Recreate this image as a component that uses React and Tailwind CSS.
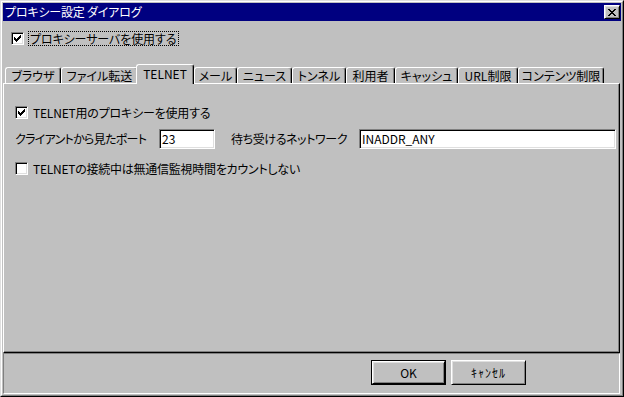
import React from 'react';

const FONT = "font-['Noto_Sans_CJK_JP','Noto_Sans',sans-serif] [font-feature-settings:'palt']";

// classic 7x7 check mark, one column per rect
const CHECK_COLS = [2, 3, 4, 3, 2, 1, 0];

const CheckBox = ({ checked }) => (
  <div className="w-[13px] h-[13px] box-border border border-t-[#808080] border-l-[#808080] border-b-white border-r-white bg-white shadow-[inset_1px_1px_0_#000,inset_-1px_-1px_0_#dfdfdf] flex items-center justify-center shrink-0">
    {checked && (
      <svg width="7" height="7" viewBox="0 0 7 7" shapeRendering="crispEdges">
        {CHECK_COLS.map((y, x) => (
          <rect key={x} x={x} y={y} width="1" height="3" fill="#000" />
        ))}
      </svg>
    )}
  </div>
);

const CloseGlyph = () => {
  const rows = [
    [0, 1, 6, 7],
    [1, 2, 5, 6],
    [2, 3, 4, 5],
    [3, 4],
    [2, 3, 4, 5],
    [1, 2, 5, 6],
    [0, 1, 6, 7],
  ];
  return (
    <svg width="8" height="7" viewBox="0 0 8 7" shapeRendering="crispEdges">
      {rows.map((xs, y) => xs.map((x) => <rect key={`${x}-${y}`} x={x} y={y} width="1" height="1" fill="#000" />))}
    </svg>
  );
};

const TABS = [
  { label: "ブラウザ", w: "w-[56px]" },
  { label: "ファイル転送", w: "w-[77px]" },
  { label: "TELNET", w: "w-[58px]", active: true },
  { label: "メール", w: "w-[43px]" },
  { label: "ニュース", w: "w-[55px]" },
  { label: "トンネル", w: "w-[54px]" },
  { label: "利用者", w: "w-[49px]" },
  { label: "キャッシュ", w: "w-[63px]" },
  { label: "URL制限", w: "w-[60px]" },
  { label: "コンテンツ制限", w: "w-[86px]" },
];

const Field = ({ value, className }) => (
  <div className={`h-[20px] box-border border border-t-[#808080] border-l-[#808080] border-b-white border-r-white bg-white shadow-[inset_1px_1px_0_#000,inset_-1px_-1px_0_#dfdfdf] pl-[2px] flex items-center text-[12px] leading-none text-black ${className}`}>
    {value}
  </div>
);

export default function App() {
  return (
    <div className={`w-[624px] h-[397px] box-border border border-t-[#dfdfdf] border-l-[#dfdfdf] border-r-black border-b-black ${FONT}`}>
      <div className="h-full box-border border border-t-white border-l-white border-r-[#808080] border-b-[#808080] bg-[#c0c0c0] flex flex-col">
        {/* Title bar */}
        <div className="mt-[1px] mx-[1px] h-[18px] bg-[#000080] flex items-center pl-[2px] pr-[1px] shrink-0">
          <span className="text-white text-[12px] leading-none flex-1 tracking-[-0.2px]">プロキシー設定 ダイアログ</span>
          <div className="w-[16px] h-[14px] box-border border border-t-white border-l-white border-r-black border-b-black shadow-[inset_1px_1px_0_#dfdfdf,inset_-1px_-1px_0_#808080] bg-[#c0c0c0] flex items-center justify-center">
            <CloseGlyph />
          </div>
        </div>

        {/* Use proxy */}
        <div className="mt-[10px] h-[15px] ml-[9px] flex items-center shrink-0">
          <CheckBox checked />
          <div className="ml-[4px] h-[15px] w-[151px] box-border border border-dotted border-black flex items-center pl-[1px] text-[12px] leading-none text-black tracking-[-0.1px]">
            プロキシーサーバを使用する
          </div>
        </div>

        {/* Tabs */}
        <div className="mt-[18px] h-[19px] pl-[3px] flex items-end shrink-0">
          {TABS.map((t) =>
            t.active ? (
              <div
                key={t.label}
                className={`${t.w} -ml-[2px] h-[20px] -mb-[1px] relative z-10 box-border border-t border-l border-r border-t-white border-l-white border-r-black rounded-t-[3px] bg-[#c0c0c0] shadow-[inset_-1px_0_0_#808080] flex justify-center pt-[2px] text-[12px] leading-[14px] text-black`}
              >
                {t.label}
              </div>
            ) : (
              <div
                key={t.label}
                className={`${t.w} h-[16px] box-border border-t border-l border-r border-t-white border-l-white border-r-black rounded-t-[3px] shadow-[inset_-1px_0_0_#808080] flex justify-center pt-[1px] text-[12px] leading-[14px] text-black`}
              >
                {t.label}
              </div>
            )
          )}
        </div>

        {/* Panel */}
        <div className="ml-[1px] w-[617px] h-[270px] box-border border border-t-white border-l-white border-r-black border-b-black shadow-[inset_-1px_-1px_0_#808080] flex flex-col pl-[11px] shrink-0 text-[12px] leading-none text-black">
          <div className="mt-[21px] h-[15px] flex items-center">
            <CheckBox checked />
            <span className="ml-[5px] tracking-[-0.2px]">TELNET用のプロキシーを使用する</span>
          </div>
          <div className="mt-[9px] h-[20px] flex items-center">
            <span className="w-[144px] tracking-[-0.7px]">クライアントから見たポート</span>
            <Field value="23" className="w-[56px]" />
            <span className="ml-[16px] w-[128px] tracking-[-0.4px]">待ち受けるネットワーク</span>
            <Field value="INADDR_ANY" className="w-[257px]" />
          </div>
          <div className="mt-[12px] h-[15px] flex items-center">
            <CheckBox />
            <span className="ml-[5px] tracking-[-0.25px]">TELNETの接続中は無通信監視時間をカウントしない</span>
          </div>
        </div>

        {/* Button strip */}
        <div className="ml-[1px] w-[617px] h-[41px] box-border border border-t-[#808080] border-l-[#808080] border-r-white border-b-white flex items-start pt-[6px] pl-[367px] gap-[5px] shrink-0 text-[12px] text-black">
          <div className="w-[75px] h-[25px] box-border border border-black">
            <div className="h-full box-border border border-t-white border-l-white border-r-black border-b-black shadow-[inset_1px_1px_0_#dfdfdf,inset_-1px_-1px_0_#808080] flex items-center justify-center leading-none">
              OK
            </div>
          </div>
          <div className="w-[75px] h-[25px] box-border border border-t-white border-l-white border-r-black border-b-black shadow-[inset_1px_1px_0_#dfdfdf,inset_-1px_-1px_0_#808080] flex items-center justify-center leading-none tracking-[1px]">
            ｷｬﾝｾﾙ
          </div>
        </div>
      </div>
    </div>
  );
}
